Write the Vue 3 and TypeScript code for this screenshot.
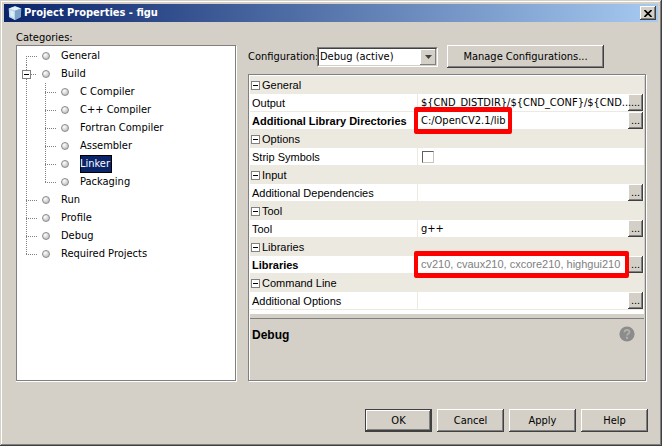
<script setup lang="ts">
import { ref } from 'vue'

interface Category {
  name: string
  children?: Category[]
}

interface Property {
  id: string
  name: string
  value?: string
  bold?: boolean
  kind?: 'check' | 'plain'
  inherited?: boolean
  marked?: 'short' | 'full'
}

interface Section {
  title: string
  rows: Property[]
}

const categories: Category[] = [
  { name: 'General' },
  {
    name: 'Build',
    children: [
      { name: 'C Compiler' },
      { name: 'C++ Compiler' },
      { name: 'Fortran Compiler' },
      { name: 'Assembler' },
      { name: 'Linker' },
      { name: 'Packaging' },
    ],
  },
  { name: 'Run' },
  { name: 'Profile' },
  { name: 'Debug' },
  { name: 'Required Projects' },
]

const sections: Section[] = [
  {
    title: 'General',
    rows: [
      { id: 'output', name: 'Output', value: '${CND_DISTDIR}/${CND_CONF}/${CND...' },
      { id: 'libdirs', name: 'Additional Library Directories', value: 'C:/OpenCV2.1/lib', bold: true, marked: 'short' },
    ],
  },
  { title: 'Options', rows: [{ id: 'strip', name: 'Strip Symbols', kind: 'check' }] },
  { title: 'Input', rows: [{ id: 'deps', name: 'Additional Dependencies' }] },
  { title: 'Tool', rows: [{ id: 'tool', name: 'Tool', value: 'g++' }] },
  {
    title: 'Libraries',
    rows: [
      { id: 'libs', name: 'Libraries', value: 'cv210, cvaux210, cxcore210, highgui210', bold: true, inherited: true, marked: 'full' },
    ],
  },
  { title: 'Command Line', rows: [{ id: 'options', name: 'Additional Options' }] },
]

const selected = ref('Linker')
const buildOpen = ref(true)
const configuration = ref('Debug (active)')
const strip = ref(false)
</script>

<template>
  <div class="dialog">
    <header class="titlebar">
      <svg class="cube" width="14" height="14" viewBox="0 0 14 14" aria-hidden="true">
        <path d="M7 0.2 13.2 2.4 12.8 10.9 7 13.9 1.2 10.9 0.8 2.4Z" fill="#8fb4d2" />
        <path d="M7 0.2 13.2 2.4 7 4.8 0.8 2.4Z" fill="#e4f1f8" />
        <path d="M0.8 2.4 7 4.8V13.9L1.2 10.9Z" fill="#bcd9ea" />
        <path d="M7 4.8 13.2 2.4 12.8 10.9 7 13.9Z" fill="#7da3c6" />
        <path d="M2.2 4.2 5.8 5.7V11.8L2.5 10Z" fill="#dceef6" />
      </svg>
      <h1>Project Properties - figu</h1>
      <button class="close" type="button" aria-label="Close">
        <svg width="8" height="7" viewBox="0 0 8 7"><path d="M0.5 0 7.5 7M7.5 0 0.5 7" stroke="#000" stroke-width="1.6" /></svg>
      </button>
    </header>

    <main class="content">
      <section class="side">
        <h2 id="categories-label">Categories:</h2>
        <div class="tree-box">
          <ul class="tree" aria-labelledby="categories-label">
            <li v-for="item in categories" :key="item.name">
              <div class="node" :class="{ parent: item.children }">
                <button
                  v-if="item.children"
                  class="expander"
                  type="button"
                  aria-label="Toggle"
                  @click="buildOpen = !buildOpen"
                ></button>
                <span class="branch"></span>
                <span class="bullet"></span>
                <span class="label" :class="{ selected: selected === item.name }" @click="selected = item.name">{{ item.name }}</span>
              </div>
              <ul v-if="item.children && buildOpen" class="subtree">
                <li v-for="child in item.children" :key="child.name">
                  <div class="node">
                    <span class="branch"></span>
                    <span class="bullet"></span>
                    <span class="label" :class="{ selected: selected === child.name }" @click="selected = child.name">{{ child.name }}</span>
                  </div>
                </li>
              </ul>
            </li>
          </ul>
        </div>
      </section>

      <section class="detail">
        <div class="config-row">
          <label for="configuration">Configuration:</label>
          <div class="combo">
            <select id="configuration" v-model="configuration">
              <option>Debug (active)</option>
            </select>
            <span class="combo-arrow">
              <svg width="7" height="4" viewBox="0 0 7 4"><path d="M0 0H7L3.5 4Z" fill="#404040" /></svg>
            </span>
          </div>
          <button class="push manage" type="button">Manage Configurations...</button>
        </div>

        <div class="sheet">
          <div class="grid-area">
            <table>
              <colgroup>
                <col class="name-col" />
                <col />
                <col class="more-col" />
              </colgroup>
              <tbody v-for="section in sections" :key="section.title">
                <tr class="section">
                  <th colspan="3" scope="rowgroup">
                    <span class="section-title">
                      <button class="expander" type="button" aria-label="Toggle"></button>{{ section.title }}
                    </span>
                  </th>
                </tr>
                <tr v-for="row in section.rows" :key="row.id" class="prop">
                  <th scope="row" :class="{ bold: row.bold }">
                    <label v-if="row.kind === 'check'" :for="row.id">{{ row.name }}</label>
                    <template v-else>{{ row.name }}</template>
                  </th>
                  <td v-if="row.kind === 'check'" class="value" colspan="2">
                    <input :id="row.id" v-model="strip" type="checkbox" />
                  </td>
                  <template v-else>
                    <td class="value" :class="{ inherited: row.inherited }">
                      {{ row.value }}
                      <span v-if="row.marked" class="mark" :class="row.marked"></span>
                    </td>
                    <td class="more"><button type="button" :aria-label="'Edit ' + row.name">...</button></td>
                  </template>
                </tr>
              </tbody>
            </table>
          </div>
          <div class="splitter"></div>
          <div class="description">
            <h3>Debug</h3>
            <button class="help-icon" type="button" aria-label="Help on property">
              <svg width="16" height="16" viewBox="0 0 16 16">
                <circle cx="8" cy="8" r="7.6" fill="#8c8c8c" />
                <path d="M5.6 6.2C5.6 3.2 10.5 3.2 10.5 6C10.5 7.7 8 7.8 8 9.6" fill="none" stroke="#b4b1ab" stroke-width="1.8" />
                <rect x="7" y="10.8" width="2" height="2" fill="#b4b1ab" />
              </svg>
            </button>
          </div>
        </div>
      </section>
    </main>

    <footer class="actions">
      <button class="push default" type="button">OK</button>
      <button class="push" type="button">Cancel</button>
      <button class="push" type="button">Apply</button>
      <button class="push" type="button">Help</button>
    </footer>
  </div>
</template>

<style>
body {
  background: #d4d0c8;
}
</style>

<style scoped>
* {
  box-sizing: border-box;
}

.dialog {
  display: flex;
  flex-direction: column;
  min-height: 100vh;
  padding: 4px;
  background: #d4d0c8;
  box-shadow:
    inset -1px -1px #404040,
    inset 1px 1px #d4d0c8,
    inset -2px -2px #808080,
    inset 2px 2px #fff;
  color: #000;
  font: 11px/16px "DejaVu Sans Condensed", "Noto Sans", sans-serif;
  white-space: nowrap;
}

button,
select {
  margin: 0;
  padding: 0;
  color: inherit;
  font: inherit;
}

h1,
h2,
h3 {
  margin: 0;
  font-size: 11px;
}

.titlebar {
  display: flex;
  align-items: center;
  height: 18px;
  padding: 0 2px 0 4px;
  background: linear-gradient(to right, #0a246a, #a6caf0);
}

.titlebar h1 {
  flex: 1;
  margin-left: 2px;
  color: #fff;
  font-weight: bold;
}

.close {
  display: flex;
  align-items: center;
  justify-content: center;
  width: 16px;
  height: 14px;
  border: 0;
  background: #d4d0c8;
  box-shadow:
    inset -1px -1px #404040,
    inset 1px 1px #fff,
    inset -2px -2px #808080;
}

.content {
  display: grid;
  flex: 1;
  grid-template-columns: 220px 1fr;
  gap: 12px;
  padding: 8px 12px 0;
}

.side {
  display: flex;
  flex-direction: column;
}

.side h2 {
  height: 15px;
  font-weight: normal;
}

.tree-box {
  flex: 1;
  padding: 1px 0;
  border: 1px solid #808080;
  background: #fff;
  box-shadow: 0 1px #fff, 1px 1px #fff;
}

ul {
  margin: 0;
  padding: 0;
  list-style: none;
}

.subtree {
  padding-left: 19px;
}

/* Dotted guide running down the left of every sibling list */
li {
  background: repeating-linear-gradient(to bottom, #808080 0 1px, transparent 1px 2px) 9px 0 / 1px 100% no-repeat;
}

.tree > li:first-child {
  background-position: 9px 9px;
}

li:last-child {
  background-size: 1px 10px;
}

.subtree > li {
  background-position: 9px 0;
}

.node {
  display: flex;
  align-items: center;
  height: 18px;
  padding-left: 9px;
}

.node.parent {
  padding-left: 5px;
}

.branch {
  width: 11px;
  height: 1px;
  background: repeating-linear-gradient(to right, #808080 0 1px, transparent 1px 2px);
}

.parent .branch {
  width: 6px;
}

.bullet {
  width: 8px;
  height: 8px;
  margin: 0 11px 0 5px;
  border: 1px solid #8a8a8a;
  border-radius: 50%;
  background: radial-gradient(circle at 35% 30%, #fff, #b0b0b0);
}

.label {
  height: 18px;
  padding-right: 2px;
  line-height: 18px;
}

.label.selected {
  background: #0a246a;
  box-shadow: inset 0 0 0 1px #000;
  color: #fff;
}

.expander {
  flex: none;
  width: 9px;
  height: 9px;
  border: 1px solid #808080;
  background: linear-gradient(#000, #000) center / 5px 1px no-repeat #fff;
}

.detail {
  display: flex;
  flex-direction: column;
  gap: 6px;
  min-width: 0;
  padding-top: 15px;
}

.config-row {
  display: flex;
  align-items: center;
  height: 23px;
}

.config-row label {
  width: 69px;
}

.combo {
  display: grid;
  align-items: center;
  width: 121px;
  height: 20px;
  margin-right: 9px;
  border: 1px solid #808080;
  border-right-color: #fff;
  border-bottom-color: #fff;
  background: #fff;
}

.combo select,
.combo-arrow {
  grid-area: 1 / 1;
}

.combo select {
  width: 100%;
  height: 18px;
  padding: 0 1px;
  border: 1px solid #404040;
  border-right-color: #d4d0c8;
  border-bottom-color: #d4d0c8;
  border-radius: 0;
  background: #fff;
  appearance: none;
}

.combo-arrow {
  display: flex;
  align-items: center;
  justify-content: center;
  justify-self: end;
  width: 16px;
  height: 16px;
  margin-right: 1px;
  background: #d4d0c8;
  box-shadow:
    inset -1px -1px #808080,
    inset 1px 1px #fff;
  pointer-events: none;
}

.push {
  width: 67px;
  height: 23px;
  border: 0;
  background: #d4d0c8;
  box-shadow:
    inset -1px -1px #404040,
    inset 1px 1px #fff,
    inset -2px -2px #808080;
}

.push.manage {
  width: 157px;
}

.push.default {
  border: 1px solid #404040;
}

.sheet {
  display: flex;
  flex: 1;
  flex-direction: column;
  border: 1px solid #808080;
  box-shadow:
    1px 1px #fff,
    inset 1px 1px #fff;
  padding: 1px 1px 0;
  font-family: "Liberation Sans", Arial, sans-serif;
}

.grid-area {
  padding-bottom: 4px;
  background: #fff;
}

table {
  width: 100%;
  border-collapse: separate;
  border-spacing: 0;
  table-layout: fixed;
}

.name-col {
  width: 168px;
}

.more-col {
  width: 16px;
}

tr {
  height: 18px;
}

th,
td {
  height: 18px;
  padding: 0;
  font-weight: normal;
  line-height: 17px;
  text-align: left;
}

.section th {
  padding-left: 1px;
  background: #ece9e0;
}

.section-title {
  display: flex;
  align-items: center;
  gap: 2px;
}

.prop th {
  padding: 2px 0 0 2px;
  border-right: 1px solid #ece9e0;
  line-height: 15px;
}

.prop th,
.prop td {
  border-bottom: 1px solid #ece9e0;
}

.prop .bold {
  font-weight: bold;
}

.value {
  position: relative;
  padding-left: 3px;
  font-family: "DejaVu Sans Condensed", "Noto Sans", sans-serif;
}

.value.inherited {
  color: #808080;
  font-family: "Liberation Sans", Arial, sans-serif;
}

.value input {
  display: block;
  width: 12px;
  height: 12px;
  margin: 0 0 0 1px;
  border: 1px solid #c8c5be;
  border-top-color: #606060;
  border-left-color: #606060;
  background: #fff;
  appearance: none;
}

.more button {
  display: block;
  width: 15px;
  height: 17px;
  border: 0;
  background: #d4d0c8;
  box-shadow:
    inset -1px -1px #404040,
    inset 1px 1px #fff,
    inset -2px -2px #808080;
  line-height: 17px;
}

.mark {
  position: absolute;
  z-index: 1;
  top: -5px;
  left: -4px;
  height: 27px;
  border: solid #f00;
  border-width: 5px 4px;
  border-radius: 2px;
}

.mark.short {
  width: 98px;
}

.mark.full {
  right: -1px;
}

.splitter {
  height: 5px;
  border-bottom: 1px solid #808080;
  background: #d4d0c8;
}

.description {
  display: flex;
  align-items: flex-start;
  justify-content: space-between;
  min-height: 60px;
  padding: 7px 9px 0 2px;
}

.description h3 {
  font-size: 12px;
  line-height: 18px;
}

.help-icon {
  border: 0;
  background: none;
  line-height: 0;
}

.actions {
  display: flex;
  justify-content: flex-end;
  gap: 5px;
  padding: 28px 10px 10px;
}
</style>
